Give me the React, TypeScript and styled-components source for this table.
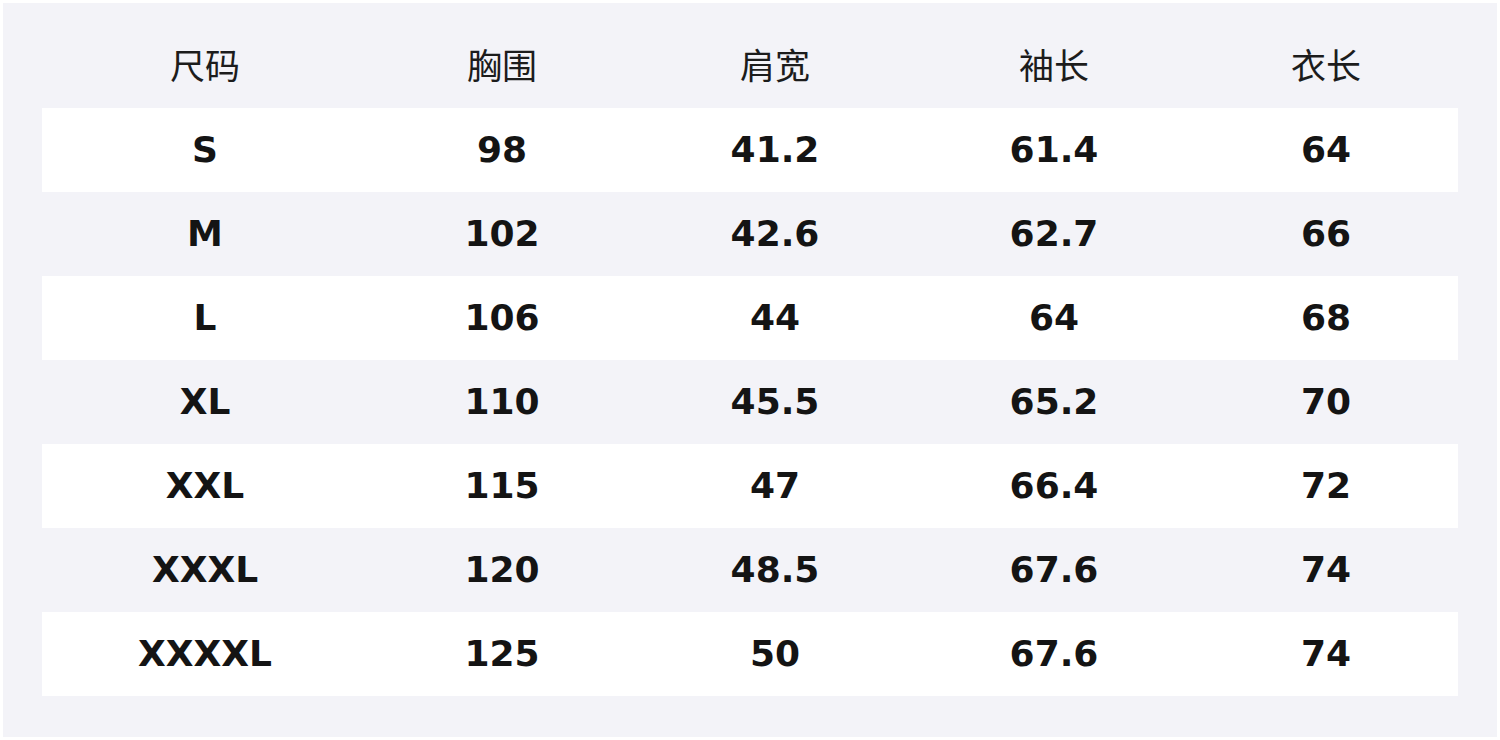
import styled, { createGlobalStyle } from 'styled-components';

const GlobalStyle = createGlobalStyle`
  html, body {
    margin: 0;
    padding: 0;
    background: #ffffff;
  }
`;

const Page = styled.div`
  width: 1500px;
  height: 740px;
  padding: 3px;
  box-sizing: border-box;
`;

const Panel = styled.div`
  height: 100%;
  box-sizing: border-box;
  background: #f3f3f8;
  padding: 21px 39px 0 39px;
`;

const Row = styled.div<{ $striped?: boolean }>`
  display: grid;
  grid-template-columns: 326px 268px 278px 280px 1fr;
  height: 84px;
  align-items: center;
  background: ${props => (props.$striped ? '#ffffff' : 'transparent')};
`;

const HeadCell = styled.div`
  text-align: center;
  font-family: 'Noto Sans CJK SC', 'Noto Sans', sans-serif;
  font-size: 35px;
  color: #1c1c1c;
  line-height: 1;
  padding-bottom: 6px;
`;

const Cell = styled.div`
  text-align: center;
  font-family: 'DejaVu Sans', 'Noto Sans', sans-serif;
  font-weight: bold;
  font-size: 36px;
  color: #141414;
  line-height: 1;
`;

const headers = ['尺码', '胸围', '肩宽', '袖长', '衣长'];

const rows = [
  ['S', '98', '41.2', '61.4', '64'],
  ['M', '102', '42.6', '62.7', '66'],
  ['L', '106', '44', '64', '68'],
  ['XL', '110', '45.5', '65.2', '70'],
  ['XXL', '115', '47', '66.4', '72'],
  ['XXXL', '120', '48.5', '67.6', '74'],
  ['XXXXL', '125', '50', '67.6', '74'],
];

export default function App() {
  return (
    <>
      <GlobalStyle />
      <Page>
        <Panel>
          <Row>
            {headers.map(h => (
              <HeadCell key={h}>{h}</HeadCell>
            ))}
          </Row>
          {rows.map((r, i) => (
            <Row key={r[0]} $striped={i % 2 === 0}>
              {r.map((v, j) => (
                <Cell key={j}>{v}</Cell>
              ))}
            </Row>
          ))}
        </Panel>
      </Page>
    </>
  );
}
